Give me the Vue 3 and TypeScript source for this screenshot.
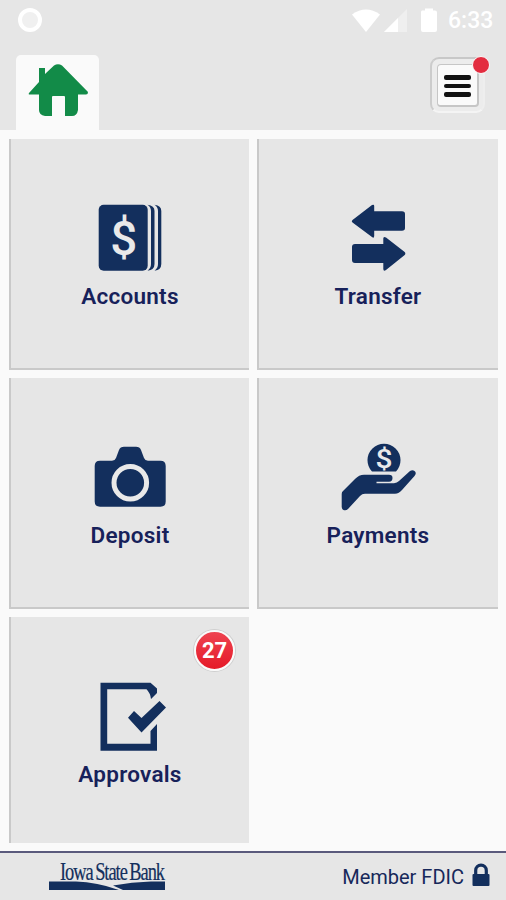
<script setup lang="ts">
interface Tile {
  id: string
  label: string
  badge?: number
}

const tiles: Tile[] = [
  { id: 'accounts', label: 'Accounts' },
  { id: 'transfer', label: 'Transfer' },
  { id: 'deposit', label: 'Deposit' },
  { id: 'payments', label: 'Payments' },
  { id: 'approvals', label: 'Approvals', badge: 27 },
]
</script>

<template>
  <div class="screen">
    <header class="header">
      <div class="status">
        <span class="recording"></span>
        <svg class="signals" width="90" height="28" viewBox="0 0 90 28">
          <path d="M0 6 Q14 -4 28 6 L14 23.500Z" fill="#fff" transform="translate(0 3.500)" />
          <path d="M32 27 L55 4 V27Z" fill="#efefef" />
          <path d="M32 27 L46 13 V27Z" fill="#fff" />
          <path d="M70 5.500 H73 V3.500 H81 V5.500 H83 Q85 5.500 85 7.500 V25 Q85 27 83 27 H71 Q69 27 69 25 V7.500 Q69 5.500 70 5.500Z" fill="#fff" />
        </svg>
        <span class="time">6:33</span>
      </div>
      <div class="nav">
        <div class="home">
          <svg width="60" height="54" viewBox="0 0 60 54">
            <path d="M1 30 L11 19 V5 H17 V11 L26 2.500 Q30 0 34 2.500 L60 29 Q60 31.500 58 31.500 H50 V47 Q49 53 44 53 H37 V34 Q37 33 36 33 H25 Q24 33 24 34 V53 H17 Q11 52 11 47 V31.500 H2 Q0 31.500 1 30Z" fill="#128b48" />
          </svg>
        </div>
        <button class="menu" aria-label="Menu">
          <span class="menu-face"><i></i><i></i><i></i></span>
          <span class="dot"></span>
        </button>
      </div>
    </header>

    <main class="grid">
      <section v-for="tile in tiles" :key="tile.id" class="tile">
        <svg class="icon" width="90" height="80" viewBox="0 0 90 80">
          <g v-if="tile.id === 'accounts'">
            <rect x="13.700" y="4.700" width="49" height="66" rx="5" />
            <path d="M62.500 4.700 Q69.500 5.500 69.500 11 V64 Q69.500 70 62.500 70.700 Q66 68 66 64 V11 Q66 7 62.500 4.700Z" />
            <path d="M69.500 4.700 Q76.300 5.500 76.300 11 V64 Q76.300 70 69.500 70.700 Q73 68 73 64 V11 Q73 7 69.500 4.700Z" />
            <text class="dollar" x="38.700" y="55" font-size="48" textLength="27" lengthAdjust="spacingAndGlyphs">$</text>
          </g>
          <g v-else-if="tile.id === 'transfer'">
            <path d="M19.500 20 L39 5 Q41.200 4 41.200 6 V11.300 H69 Q72 11.300 72 14 V28 Q72 30.800 69 30.800 H41.200 V36 Q41 39 39 37 L19.500 22.500 Q18 21 19.500 20Z" />
            <path d="M71.700 52 L53 37.500 Q50.300 36 50.300 38.500 V44 H22 Q19 44 19 47 V60 Q19 63 22 63 H50.300 V69 Q50.500 72 53 70 L71.700 55 Q73 53.500 71.700 52Z" />
          </g>
          <g v-else-if="tile.id === 'deposit'">
            <path d="M15 21.700 H27 Q30 21.700 31 19 L34 11 Q35.300 7.700 39 7.700 H51 Q54.700 7.700 56 11 L59 19 Q60 21.700 63 21.700 H75.500 Q80.700 21.700 80.700 27 V62.500 Q80.700 67.700 75.500 67.700 H15 Q9.700 67.700 9.700 62.500 V27 Q9.700 21.700 15 21.700Z" />
            <circle cx="45.300" cy="43.700" r="16.300" class="ring" />
          </g>
          <g v-else-if="tile.id === 'payments'">
            <path d="M39 32.500 A16.500 16.500 0 1 1 63 32.500Z" />
            <text class="dollar" x="51" y="29" font-size="26" textLength="17" lengthAdjust="spacingAndGlyphs">$</text>
            <path d="M8.700 55 Q8.700 53 10 52 L22 40 Q26 35.700 31 35.700 H56 Q59.500 35.700 59.500 39 Q59.500 42.500 56 42.700 H43.500 V44.300 H61 Q64 44 66 42 L77 32 Q79.500 30.500 81.500 32 Q84 34 81.500 37 L69 51 Q66 54.700 62 54.700 H32 Q29 54.700 27 57 L15 70 Q13 72 10.500 71 Q8.700 70 8.700 68Z" />
          </g>
          <g v-else>
            <path d="M15.500 4.700 H65.500 L72 10.500 V15 L66 21 Q65.500 15.500 61.500 11.300 H22.200 V65.800 H65.500 V53 L72 46 V72.700 H15.500Z" />
            <path d="M43 39.700 L49 33 L56.500 40 L74.500 23 L81 29.500 L56.500 54.500Z" />
          </g>
        </svg>
        <h2 class="label">{{ tile.label }}</h2>
        <span v-if="tile.badge" class="badge">{{ tile.badge }}</span>
      </section>
    </main>

    <footer class="footer">
      <svg class="bank" width="120" height="36" viewBox="0 0 120 36">
        <text x="12" y="24" font-size="25" textLength="104" lengthAdjust="spacingAndGlyphs">Iowa State Bank</text>
        <path d="M1 25.500 H28 Q49 26 71 34 H1Z" />
        <path d="M65 29.500 Q84 26 103 25.500 H117 V34 H75Z" />
      </svg>
      <div class="member">
        <span>Member FDIC</span>
        <svg width="18" height="24" viewBox="0 0 18 24">
          <path d="M3.700 12 V7.500 A5.300 5.300 0 0 1 14.300 7.500 V12" fill="none" stroke="#132f5d" stroke-width="3.200" />
          <rect x="0.500" y="11" width="17" height="12" rx="1" fill="#132f5d" />
        </svg>
      </div>
    </footer>
  </div>
</template>

<style>
body {
  margin: 0;
}
</style>

<style scoped>
.screen {
  display: flex;
  flex-direction: column;
  width: 506px;
  height: 900px;
  overflow: hidden;
  background: #fafafa;
  font-family: Roboto, "Liberation Sans", sans-serif;
}
.header {
  height: 130px;
  background: #e6e6e6;
}
.status {
  display: flex;
  height: 55px;
  box-sizing: border-box;
  padding: 5px 12px 0 18px;
  color: #fff;
}
.recording {
  box-sizing: border-box;
  width: 24px;
  height: 24px;
  margin-top: 3px;
  border: 4.5px solid #fff;
  border-radius: 50%;
  background: #f0f0f0;
}
.signals {
  margin-left: auto;
}
.time {
  width: 46px;
  margin-left: 6px;
  font-size: 23px;
  font-weight: 500;
  line-height: 32px;
}
.nav {
  display: flex;
  justify-content: space-between;
  height: 75px;
  padding: 0 21px 0 16px;
}
.home {
  box-sizing: border-box;
  width: 83px;
  height: 76px;
  padding: 8px 0 0 12px;
  border-radius: 5px 5px 0 0;
  background: #fafafa;
}
.menu {
  position: relative;
  box-sizing: border-box;
  width: 55px;
  height: 56px;
  margin-top: 2px;
  padding: 5px;
  border: 2px solid;
  border-color: #c8c8c8 #eee #f4f4f4 #ccc;
  border-radius: 9px;
  background: #ececec;
}
.menu-face {
  display: flex;
  flex-direction: column;
  align-items: center;
  justify-content: center;
  gap: 4px;
  box-sizing: border-box;
  width: 42px;
  height: 43px;
  padding-top: 2px;
  border: 1px solid #c6c6c6;
  border-right-width: 2px;
  border-bottom-width: 2px;
  border-radius: 4px;
  background: #fafafa;
}
.menu-face i {
  width: 27px;
  height: 4.5px;
  border-radius: 2px;
  background: #111;
}
.dot {
  position: absolute;
  top: -3px;
  right: -7px;
  width: 16px;
  height: 16px;
  border: 1.5px solid #fafafa;
  border-radius: 50%;
  background: #e32c3f;
}
.grid {
  flex: 1;
  display: grid;
  grid-template-columns: 240px 241px;
  grid-template-rows: 231px 231px 226px;
  gap: 8px;
  padding: 9px 8px 0 9px;
}
.tile {
  position: relative;
  display: flex;
  flex-direction: column;
  align-items: center;
  box-sizing: border-box;
  padding-top: 61px;
  border-left: 2px solid #c9c9c9;
  border-bottom: 2px solid #c9c9c9;
  background: #e6e6e6;
}
.tile:nth-child(even) {
  padding-right: 1px;
}
.tile:last-child {
  border-bottom-width: 0;
}
.icon {
  flex: none;
  fill: #132f5d;
}
.ring {
  fill: none;
  stroke: #e9e9e9;
  stroke-width: 5;
}
.dollar {
  fill: #e9e9e9;
  font-family: Roboto, sans-serif;
  font-weight: 500;
  text-anchor: middle;
}
.label {
  margin: 3px 0 0;
  color: #17215a;
  font-size: 22.5px;
  font-weight: 600;
  line-height: 26px;
  letter-spacing: 0.25px;
}
.badge {
  position: absolute;
  top: 13px;
  right: 14px;
  box-sizing: border-box;
  width: 41px;
  height: 41px;
  border: 2px solid #fafafa;
  border-radius: 50%;
  background: linear-gradient(#ee4350, #e51a28);
  box-shadow: 0 0 0 1px #cfcfcf;
  color: #fff;
  font-size: 22px;
  font-weight: 700;
  line-height: 38px;
  text-align: center;
}
.footer {
  display: flex;
  align-items: flex-start;
  justify-content: space-between;
  box-sizing: border-box;
  height: 49px;
  padding: 3px 16px 0 48px;
  border-top: 2px solid #5a5a7c;
  background: #e6e6e6;
}
.bank {
  overflow: visible;
  fill: #132f5d;
  font-family: "Liberation Serif", serif;
  letter-spacing: -1.4px;
  word-spacing: -1.5px;
}
.bank text {
  stroke: #132f5d;
  stroke-width: 0.2px;
}
.member {
  display: flex;
  gap: 8px;
  margin-top: 7px;
  color: #17285a;
  font-size: 20px;
  line-height: 28px;
}
</style>
